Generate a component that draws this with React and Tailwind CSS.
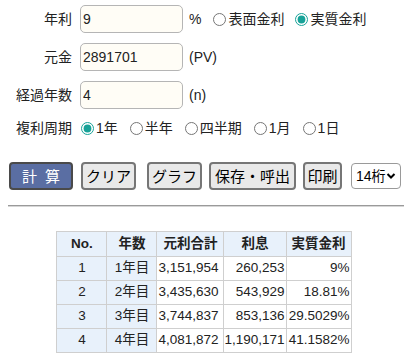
import React from 'react'

const font = { fontFamily: '"Liberation Sans", "Noto Sans CJK JP", sans-serif' }

const rows = [
    ['1', '1年目', '3,151,954', '260,253', '9%'],
    ['2', '2年目', '3,435,630', '543,929', '18.81%'],
    ['3', '3年目', '3,744,837', '853,136', '29.5029%'],
    ['4', '4年目', '4,081,872', '1,190,171', '41.1582%'],
]

function Field({ label, value, children }) {
    return (
        <div className="flex items-center h-[28px]">
            <span className="w-[73px] text-right pr-[1px]">{label}</span>
            <input
                readOnly
                value={value}
                className="ml-[7px] w-[103px] h-[28px] px-[2px] bg-[#fffdf6] border border-[#b5b5b5] rounded-[5px] text-[14px] outline-none"
            />
            <span className="ml-[6px] flex items-center">{children}</span>
        </div>
    )
}

function Radio({ label, checked, name, className = '' }) {
    return (
        <label className={'flex items-center ' + className}>
            <input
                type="radio"
                name={name}
                defaultChecked={checked}
                className="w-[13px] h-[13px] ml-[5px] mr-[2px] accent-[#17a298]"
            />
            <span>{label}</span>
        </label>
    )
}

function Btn({ children, className = '' }) {
    return (
        <button className={'h-[28px] px-0 border-2 rounded-[4px] text-[15px] leading-none whitespace-nowrap ' + className}>
            {children}
        </button>
    )
}

export default function App() {
    return (
        <div className="w-[412px] h-[364px] bg-white text-[#222] text-[14px] overflow-hidden" style={font}>
            <div className="flex flex-col gap-[10px] pt-[5px]">
                <Field label="年利" value="9">
                    <span>%</span>
                    <span className="flex items-center ml-[7px]">
                        <Radio name="k" label="表面金利" />
                        <Radio name="k" label="実質金利" checked className="ml-[6px]" />
                    </span>
                </Field>
                <Field label="元金" value="2891701">
                    <span>(PV)</span>
                </Field>
                <Field label="経過年数" value="4">
                    <span>(n)</span>
                </Field>
            </div>
            <div className="flex items-center h-[20px] mt-[9px]">
                <span className="w-[73px] text-right pr-[1px]">複利周期</span>
                <span className="flex items-center gap-[7px] ml-[3px]">
                    <Radio name="p" label="1年" checked />
                    <Radio name="p" label="半年" />
                    <Radio name="p" label="四半期" />
                    <Radio name="p" label="1月" />
                    <Radio name="p" label="1日" />
                </span>
            </div>
            <div className="flex items-center mt-[24px] pl-[9px]">
                <Btn className="w-[64px] bg-[#5a6ea3] border-[#4a4a4a] text-white tracking-[8px] pl-[8px]">計算</Btn>
                <Btn className="ml-[8px] w-[55px] bg-[#e9e9e9] border-[#767676] text-black">クリア</Btn>
                <Btn className="ml-[11px] w-[55px] bg-[#e9e9e9] border-[#767676] text-black">グラフ</Btn>
                <Btn className="ml-[7px] w-[87px] bg-[#e9e9e9] border-[#767676] text-black">保存・呼出</Btn>
                <Btn className="ml-[7px] w-[39px] bg-[#e9e9e9] border-[#767676] text-black">印刷</Btn>
                <div className="ml-[9px] w-[50px] h-[26px] border border-[#9a9a9a] rounded-[4px] bg-white flex items-center justify-between pl-[4px] pr-[4px] text-[14px] text-black">
                    <span>14桁</span>
                    <svg width="10" height="10" viewBox="0 0 10 10">
                        <path d="M1.5 3 L5 6.5 L8.5 3" fill="none" stroke="#000" strokeWidth="2" />
                    </svg>
                </div>
            </div>
            <div className="mx-[8px] mt-[15px] border-t border-t-[#9a9a9a] border-b border-b-[#d6d6d6]" />
            <div className="flex justify-center mt-[24px] pr-[4px]">
                <table className="border-collapse text-[13.5px] text-[#222]">
                    <thead>
                        <tr className="h-[25px] bg-[#e8f1fb]">
                            <th className="w-[50px] border border-[#cfcfcf] font-bold">No.</th>
                            <th className="w-[50px] border border-[#cfcfcf] font-bold">年数</th>
                            <th className="w-[67px] border border-[#cfcfcf] font-bold">元利合計</th>
                            <th className="w-[60px] border border-[#cfcfcf] font-bold">利息</th>
                            <th className="w-[65px] border border-[#cfcfcf] font-bold">実質金利</th>
                        </tr>
                    </thead>
                    <tbody>
                        {rows.map((r) => (
                            <tr key={r[0]} className="h-[24px]">
                                <td className="border border-[#cfcfcf] bg-[#e8f1fb] text-center">{r[0]}</td>
                                <td className="border border-[#cfcfcf] bg-[#e8f1fb] text-center">{r[1]}</td>
                                <td className="border border-[#cfcfcf] text-left pl-[1px]">{r[2]}</td>
                                <td className="border border-[#cfcfcf] text-right pr-[1px]">{r[3]}</td>
                                <td className="border border-[#cfcfcf] text-right pr-[1px]">{r[4]}</td>
                            </tr>
                        ))}
                    </tbody>
                </table>
            </div>
        </div>
    )
}
